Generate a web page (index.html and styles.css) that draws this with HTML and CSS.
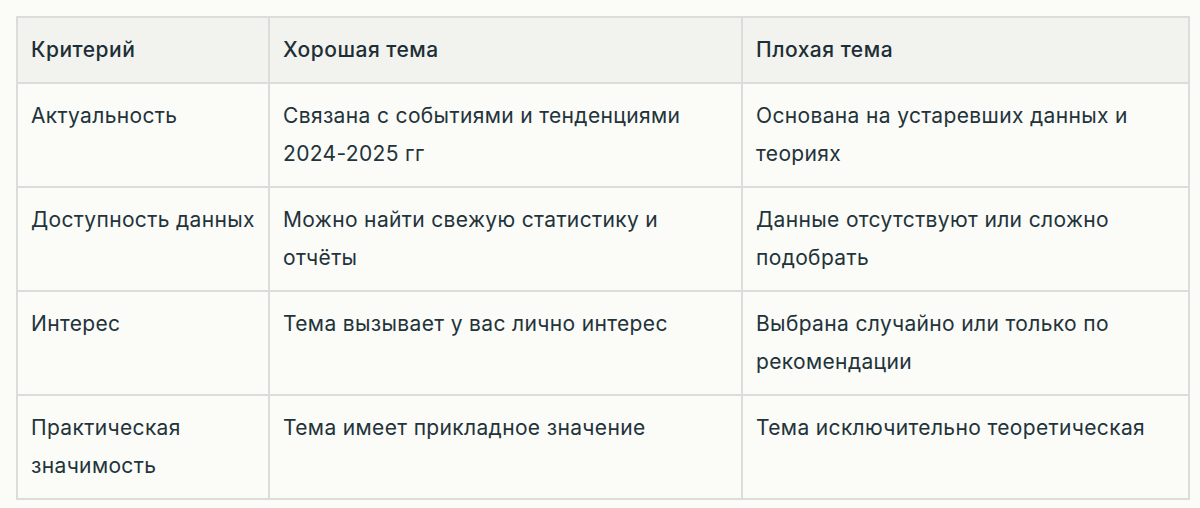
FILE: index.html
```html
<!DOCTYPE html>
<html lang="ru">
<head>
<meta charset="utf-8">
<link rel="stylesheet" href="styles.css">
</head>
<body>
<table class="grid">
  <colgroup>
    <col class="c1"><col class="c2"><col class="c3">
  </colgroup>
  <thead>
    <tr><th>Критерий</th><th>Хорошая тема</th><th>Плохая тема</th></tr>
  </thead>
  <tbody>
    <tr><td>Актуальность</td><td>Связана с событиями и тенденциями 2024-2025 гг</td><td>Основана на устаревших данных и теориях</td></tr>
    <tr><td>Доступность данных</td><td>Можно найти свежую статистику и отчёты</td><td>Данные отсутствуют или сложно подобрать</td></tr>
    <tr><td>Интерес</td><td>Тема вызывает у вас лично интерес</td><td>Выбрана случайно или только по рекомендации</td></tr>
    <tr><td>Практическая значимость</td><td>Тема имеет прикладное значение</td><td>Тема исключительно теоретическая</td></tr>
  </tbody>
</table>
</body>
</html>
```
FILE: styles.css
```css
html, body {
  margin: 0;
  background: #fbfbf8;
}
body {
  padding: 16px;
  font-family: Inter, "Noto Sans", sans-serif;
  color: #1d2f36;
}
.grid {
  width: 1172px;
  border-collapse: collapse;
  table-layout: fixed;
  font-size: 21px;
  line-height: 38px;
  letter-spacing: 0.35px;
}
.c1 { width: 252px; }
.c2 { width: 473px; }
.c3 { width: 447px; }
.grid th, .grid td {
  border: 2px solid #dcdcda;
  padding: 13px 13px;
  text-align: left;
  vertical-align: top;
}
.grid th {
  background: #f2f2ef;
  font-weight: 500;
  letter-spacing: 0.5px;
}
.grid td {
  height: 76px;
  font-weight: 400;
  color: #22333a;
}
```
